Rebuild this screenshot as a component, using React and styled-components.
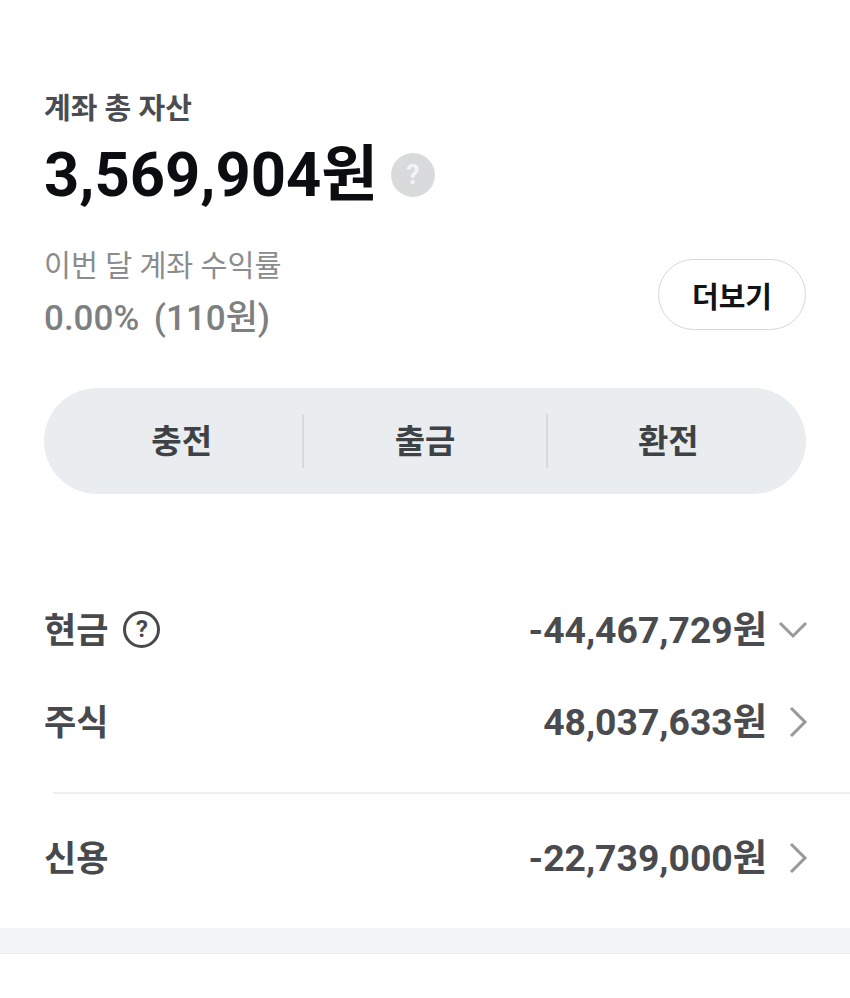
import styled, { createGlobalStyle } from "styled-components";

const GlobalStyle = createGlobalStyle`
  html, body {
    margin: 0;
    padding: 0;
    background: #fff;
    font-family: Roboto, "Noto Sans CJK KR", sans-serif;
  }
  * { box-sizing: border-box; }
`;

const Page = styled.div`
  width: 850px;
  height: 998px;
  background: #fff;
  overflow: hidden;
`;
const Summary = styled.section`
  padding: 92px 44px 0;
`;
const Label = styled.div`
  font-size: 29px;
  line-height: 34px;
  font-weight: 700;
  color: #4a4c4f;
`;
const TotalRow = styled.div`
  display: flex;
  align-items: center;
  gap: 13px;
  margin-top: 13px;
`;
const Total = styled.div`
  font-size: 61.5px;
  line-height: 72px;
  font-weight: 700;
  color: #0b0d10;
`;
const HelpFilled = styled.span`
  width: 44px;
  height: 44px;
  border-radius: 50%;
  background: #d9dadb;
  color: #f4f4f4;
  font-size: 27px;
  font-weight: 700;
  display: flex;
  align-items: center;
  justify-content: center;
`;
const ProfitRow = styled.div`
  display: flex;
  align-items: center;
  justify-content: space-between;
  margin-top: 35px;
`;
const ProfitLabel = styled.div`
  font-size: 29.3px;
  line-height: 40px;
  color: #8a8c8e;
`;
const ProfitValue = styled.div`
  font-size: 35px;
  line-height: 40px;
  font-weight: 500;
  color: #7d7f81;
  margin-top: 13px;
  word-spacing: 6px;
`;
const MoreButton = styled.button`
  width: 148px;
  height: 71px;
  margin-top: 4px;
  border: 1.5px solid #d5d8da;
  border-radius: 36px;
  background: #fff;
  color: #111316;
  font-family: inherit;
  font-size: 29px;
  font-weight: 700;
  padding: 0;
`;
const ActionBar = styled.div`
  display: flex;
  align-items: center;
  height: 106px;
  margin-top: 49px;
  padding: 0 17px;
  border-radius: 53px;
  background: #e9edf0;
`;
const Action = styled.div`
  flex: 1;
  height: 54px;
  padding-bottom: 4px;
  display: flex;
  align-items: center;
  justify-content: center;
  font-size: 33px;
  font-weight: 700;
  color: #3f4245;
  & + & {
    border-left: 2px solid #d6dadd;
  }
`;
const AssetList = styled.section`
  margin-top: 89px;
`;
const AssetRow = styled.div`
  height: ${(p) => p.$height}px;
  padding: 0 42px 4px 44px;
  display: flex;
  align-items: center;
  justify-content: space-between;
`;
const AssetName = styled.div`
  display: flex;
  align-items: center;
  gap: 15px;
  font-size: 35px;
  font-weight: 700;
  color: #47494c;
`;
const HelpOutline = styled.span`
  width: 37px;
  height: 37px;
  margin-top: 4px;
  border: 3px solid #47494c;
  border-radius: 50%;
  font-size: 24px;
  font-weight: 700;
  display: flex;
  align-items: center;
  justify-content: center;
`;
const AssetValue = styled.div`
  display: flex;
  align-items: center;
  gap: 11px;
  font-size: 37.3px;
  font-weight: 700;
  color: #494b4e;
`;
const Chevron = styled.svg`
  width: 30px;
  height: 32px;
  margin-top: 5px;
  fill: none;
  stroke: #97999b;
  stroke-width: 3;
`;
const Divider = styled.hr`
  height: 2px;
  margin: 25px 0 0 53px;
  border: 0;
  background: #eeeff0;
`;
const BottomBand = styled.div`
  height: 26px;
  margin-top: 8px;
  background: #f2f4f6;
  border-bottom: 1px solid #eceef0;
`;

const ChevronDown = () => (
  <Chevron viewBox="0 0 30 32">
    <path d="M2 9l13 13 13-13" />
  </Chevron>
);

const ChevronRight = () => (
  <Chevron viewBox="0 0 30 32">
    <path d="M13 2l14 14-14 14" />
  </Chevron>
);

const App = () => {
  return (
    <Page>
      <GlobalStyle />
      <Summary>
        <Label>계좌 총 자산</Label>
        <TotalRow>
          <Total>3,569,904원</Total>
          <HelpFilled>?</HelpFilled>
        </TotalRow>
        <ProfitRow>
          <div>
            <ProfitLabel>이번 달 계좌 수익률</ProfitLabel>
            <ProfitValue>0.00% (110원)</ProfitValue>
          </div>
          <MoreButton>더보기</MoreButton>
        </ProfitRow>
        <ActionBar>
          <Action>충전</Action>
          <Action>출금</Action>
          <Action>환전</Action>
        </ActionBar>
      </Summary>
      <AssetList>
        <AssetRow $height={92}>
          <AssetName>
            현금
            <HelpOutline>?</HelpOutline>
          </AssetName>
          <AssetValue>
            -44,467,729원
            <ChevronDown />
          </AssetValue>
        </AssetRow>
        <AssetRow $height={92}>
          <AssetName>주식</AssetName>
          <AssetValue>
            48,037,633원
            <ChevronRight />
          </AssetValue>
        </AssetRow>
        <Divider />
        <AssetRow $height={126}>
          <AssetName>신용</AssetName>
          <AssetValue>
            -22,739,000원
            <ChevronRight />
          </AssetValue>
        </AssetRow>
      </AssetList>
      <BottomBand />
    </Page>
  );
};

export default App;
